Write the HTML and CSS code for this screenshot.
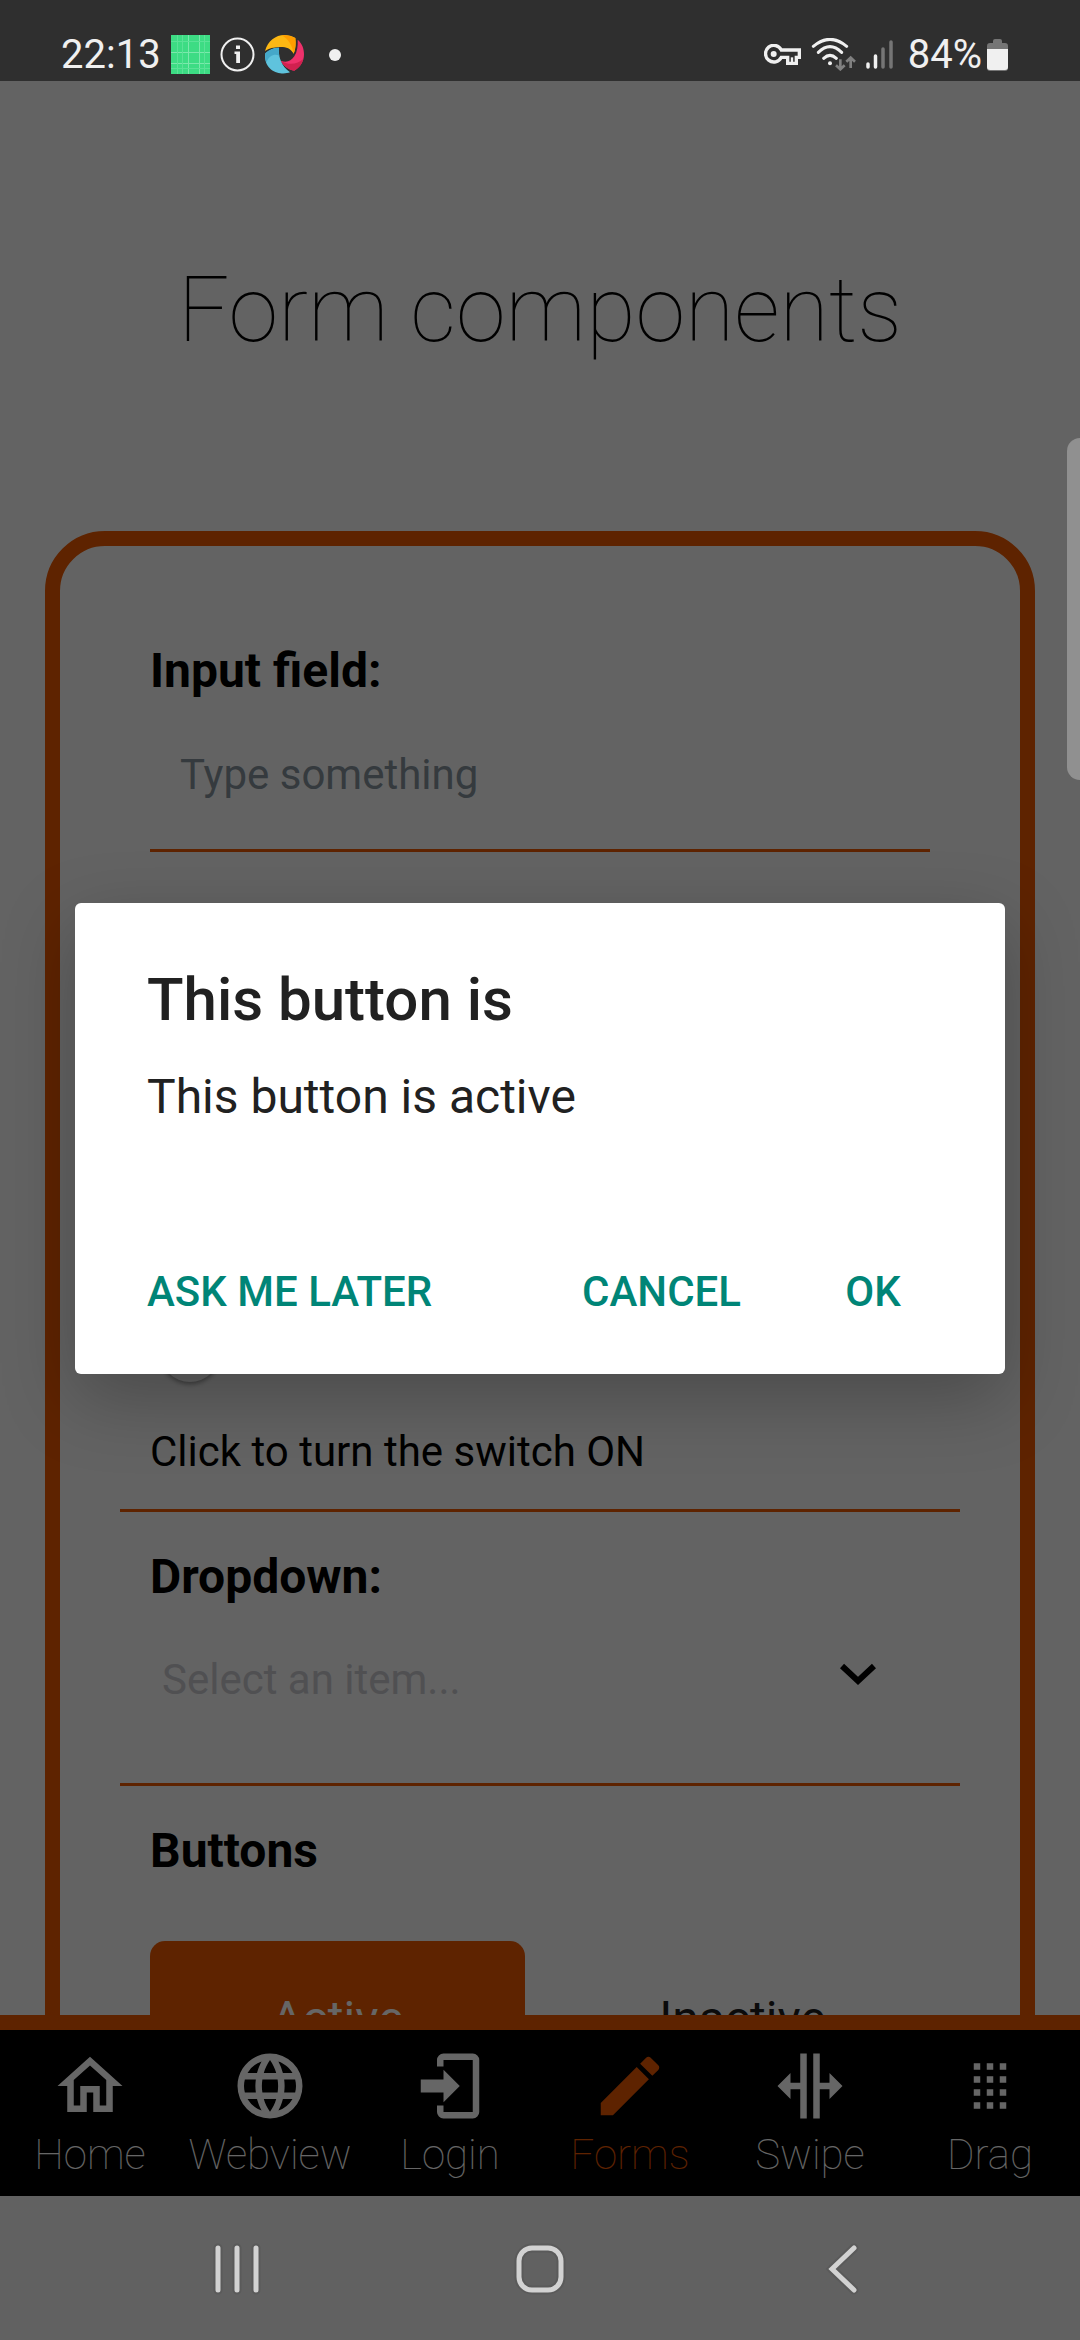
FILE: index.html
```html
<!DOCTYPE html>
<html lang="en">
<head>
<meta charset="utf-8">
<meta name="viewport" content="width=device-width, initial-scale=1">
<title>Form components</title>
<link rel="stylesheet" href="styles.css">
</head>
<body>
<header class="status-bar">
  <div class="status-group">
    <span class="clock">22:13</span>
    <svg class="status-icon" width="39" height="39" viewBox="0 0 39 39" aria-hidden="true">
      <path fill="#3ddc84" d="M0 0h39v39H0z"/>
      <path stroke="#7be8ac" stroke-width="1" d="M0 17.500h39M0 28.500h39M17.500 0v39M28.500 0v39"/>
      <path stroke="#5ae297" stroke-width="1" d="M0 6.500h39M6.500 0v39M0 33.500h39M11.500 0v39M33.500 0v39"/>
    </svg>
    <svg class="status-icon" width="35" height="35" viewBox="0 0 35 35" aria-hidden="true">
      <circle cx="17.500" cy="17.500" r="16" fill="none" stroke="#f0f0f0" stroke-width="2"/>
      <path fill="#f0f0f0" d="M16 8.500h4v3.500h-4zM14.500 14.500H20V26h-3.800v-9h-1.700z"/>
    </svg>
    <svg class="status-icon" width="39" height="39" viewBox="0 0 117 117" aria-hidden="true">
      <path fill="#fdb813" d="M0 48C8 18 32 0 58 0c12 0 24 4 33 9 2 16 1 33-5 47-10-18-26-21-44-20-16 1-30 4-42 12z"/>
      <path fill="#ff9d00" d="M50 1c14-2 30 2 41 8 2 16 1 33-5 47C82 32 70 12 50 1z"/>
      <path fill="#ee316b" d="M98 14c14 12 19 28 19 44 0 22-12 40-29 49-18-3-33-15-41-30 18 7 31 1 41-13 9-14 11-32 10-50z"/>
      <path fill="#d0214f" d="M115 72c-4 16-14 28-27 35-18-3-33-15-41-30 22 14 50 12 68-5z"/>
      <path fill="#5fc3dd" d="M1 55c11-11 25-17 41-17-2 22 3 52 33 74C50 122 0 112 0 62z"/>
      <path fill="#45a8c9" d="M1 55c11-11 25-17 41-17-1 8-1 16 1 24C28 56 14 60 4 82 1 74 0 66 1 55z"/>
    </svg>
    <span class="more-dot"></span>
  </div>
  <div class="status-group status-group-end">
    <svg width="37" height="21" viewBox="0 0 111 63" aria-hidden="true">
      <path fill="none" stroke="#f0f0f0" stroke-width="10" d="M52 18h54v22h-9v18H71V40H52A25 25 0 1 1 52 18z"/>
      <circle cx="29" cy="30" r="9" fill="#f0f0f0"/>
      <path stroke="#f0f0f0" stroke-width="7" d="M84 40v14"/>
    </svg>
    <svg class="wifi" width="45" height="33" viewBox="0 0 135 99" aria-hidden="true">
      <g fill="none" stroke="#f0f0f0" stroke-width="9" stroke-linecap="round">
        <path d="M7 25q50-42 100 0M22 43q35-34 70 0M38 61q19-18 38 0"/>
      </g>
      <circle cx="57" cy="76" r="6" fill="#f0f0f0"/>
      <path fill="none" stroke="#808080" stroke-width="8" d="M88 64v30M75 82l13 12 13-12M119 90V58M106 71l13-12 13 12"/>
    </svg>
    <svg width="27" height="30" viewBox="0 0 27 30" aria-hidden="true">
      <path stroke="#f0f0f0" stroke-width="3.500" stroke-linecap="round" d="M2 24v3M9.500 16v11"/>
      <path stroke="#757575" stroke-width="3.500" stroke-linecap="round" d="M17 9v18M25 2v25"/>
    </svg>
    <span class="battery-level">84%</span>
    <svg width="21" height="32" viewBox="0 0 21 32" aria-hidden="true">
      <path fill="#757575" d="M6 2q0-2 2-2h5q2 0 2 2v2h3q3 0 3 3v22q0 3-3 3H3q-3 0-3-3V7q0-3 3-3h3z"/>
      <path fill="#f0f0f0" d="M0 10h21v18q0 3-3 3H3q-3 0-3-3z"/>
    </svg>
  </div>
</header>

<div class="app">
  <main class="screen">
    <h1 class="title">Form components</h1>
    <form class="card">
      <section class="section section-first">
        <label class="heading" for="text-input">Input field:</label>
        <input class="text-input" id="text-input" type="text" placeholder="Type something">
      </section>
      <section class="section section-switch">
        <input class="switch" id="switch" type="checkbox" role="switch">
        <label class="caption" for="switch">Click to turn the switch ON</label>
      </section>
      <section class="section section-dropdown">
        <label class="heading" for="dropdown">Dropdown:</label>
        <div class="select-wrap">
          <select class="select" id="dropdown">
            <option>Select an item...</option>
          </select>
          <svg class="chevron" width="36" height="24" viewBox="0 0 36 24" aria-hidden="true">
            <path fill="none" stroke="#000" stroke-width="6" d="M2 4l16 15L34 4"/>
          </svg>
        </div>
      </section>
      <section class="section">
        <h2 class="heading">Buttons</h2>
        <div class="button-row">
          <button class="button button-active" type="button">Active</button>
          <button class="button" type="button">Inactive</button>
        </div>
      </section>
    </form>
  </main>

  <nav class="tabs">
    <a class="tab" href="#home">
      <svg class="tab-icon" viewBox="0 0 24 24" aria-hidden="true"><path d="M12 5.690l5 4.500V18h-2v-6H9v6H7v-7.810l5-4.500M12 3L2 12h3v8h6v-6h2v6h6v-8h3L12 3z"/></svg>
      <span>Home</span>
    </a>
    <a class="tab" href="#webview">
      <svg class="tab-icon" viewBox="0 0 24 24" aria-hidden="true"><path d="M16.360 14c.08-.66.14-1.320.14-2s-.06-1.340-.14-2h3.380c.16.640.26 1.310.26 2s-.1 1.360-.26 2m-5.150 5.560c.6-1.110 1.060-2.310 1.380-3.560h2.950a8.030 8.030 0 0 1-4.330 3.560M14.340 14H9.660c-.1-.66-.16-1.320-.16-2s.06-1.350.16-2h4.680c.09.650.16 1.320.16 2s-.07 1.340-.16 2M12 19.960c-.83-1.200-1.500-2.530-1.910-3.960h3.820c-.41 1.430-1.080 2.760-1.910 3.960M8 8H5.080A7.920 7.920 0 0 1 9.400 4.440C8.800 5.550 8.350 6.750 8 8m-2.920 8H8c.35 1.250.8 2.450 1.400 3.560A8 8 0 0 1 5.080 16m-.82-2C4.100 13.360 4 12.690 4 12s.1-1.360.26-2h3.380c-.08.660-.14 1.320-.14 2s.06 1.340.14 2M12 4.030c.83 1.200 1.500 2.540 1.910 3.970h-3.820c.41-1.430 1.080-2.770 1.910-3.970M18.920 8h-2.950a15.700 15.700 0 0 0-1.380-3.560c1.840.63 3.370 1.900 4.330 3.560M12 2C6.470 2 2 6.500 2 12a10 10 0 0 0 10 10 10 10 0 0 0 10-10A10 10 0 0 0 12 2z"/></svg>
      <span>Webview</span>
    </a>
    <a class="tab" href="#login">
      <svg class="tab-icon" viewBox="0 0 24 24" aria-hidden="true"><path d="M10 17v-3H3v-4h7V7l5 5-5 5M10 2h9a2 2 0 0 1 2 2v16a2 2 0 0 1-2 2h-9a2 2 0 0 1-2-2v-2h2v2h9V4h-9v2H8V4a2 2 0 0 1 2-2z"/></svg>
      <span>Login</span>
    </a>
    <a class="tab tab-current" href="#forms" aria-current="page">
      <svg class="tab-icon" viewBox="0 0 24 24" aria-hidden="true"><path d="M20.710 7.040c.39-.39.39-1.040 0-1.410l-2.340-2.340c-.37-.39-1.020-.39-1.410 0l-1.840 1.830 3.750 3.750M3 17.250V21h3.750L17.810 9.930l-3.750-3.750L3 17.250z"/></svg>
      <span>Forms</span>
    </a>
    <a class="tab" href="#swipe">
      <svg class="tab-icon" viewBox="0 0 24 24" aria-hidden="true"><path d="M18 16v-3h-3v9h-2V2h2v9h3V8l4 4-4 4M2 12l4 4v-3h3v9h2V2H9v9H6V8l-4 4z"/></svg>
      <span>Swipe</span>
    </a>
    <a class="tab" href="#drag">
      <svg class="tab-icon" viewBox="0 0 24 24" aria-hidden="true"><path d="M7 5h2v2H7zM11 5h2v2h-2zM15 5h2v2h-2zM7 9h2v2H7zM11 9h2v2h-2zM15 9h2v2h-2zM7 13h2v2H7zM11 13h2v2h-2zM15 13h2v2h-2zM7 17h2v2H7zM11 17h2v2h-2zM15 17h2v2h-2z"/></svg>
      <span>Drag</span>
    </a>
  </nav>

  <div class="scrim">
    <div class="dialog" role="alertdialog" aria-modal="true" aria-labelledby="dialog-title" aria-describedby="dialog-message">
      <h2 class="dialog-title" id="dialog-title">This button is</h2>
      <p class="dialog-message" id="dialog-message">This button is active</p>
      <div class="dialog-actions">
        <button class="dialog-button" type="button">ASK ME LATER</button>
        <span class="dialog-spacer"></span>
        <button class="dialog-button" type="button">CANCEL</button>
        <button class="dialog-button" type="button">OK</button>
      </div>
    </div>
  </div>
  <div class="edge-handle"></div>
</div>

<footer class="system-nav">
  <button class="system-button" type="button" aria-label="Recent apps">
    <svg width="54" height="60" viewBox="0 0 54 60" aria-hidden="true"><g fill="none" stroke-linecap="round"><path stroke="#5a5a5a" stroke-width="9" d="M8 9v42M27 9v42M46 9v42"/><path stroke="#d2d2d2" stroke-width="5" d="M8 9v42M27 9v42M46 9v42"/></g></svg>
  </button>
  <button class="system-button" type="button" aria-label="Home">
    <svg width="60" height="60" viewBox="0 0 60 60" aria-hidden="true"><g fill="none"><rect x="9" y="9" width="42" height="42" rx="13" stroke="#5a5a5a" stroke-width="9"/><rect x="9" y="9" width="42" height="42" rx="13" stroke="#d2d2d2" stroke-width="5"/></g></svg>
  </button>
  <button class="system-button" type="button" aria-label="Back">
    <svg width="60" height="60" viewBox="0 0 60 60" aria-hidden="true"><g fill="none" stroke-linecap="round"><path stroke="#5a5a5a" stroke-width="9" d="M41 9L19 30l22 21"/><path stroke="#d2d2d2" stroke-width="5" d="M41 9L19 30l22 21"/></g></svg>
  </button>
</footer>
</body>
</html>
```
FILE: styles.css
```css
:root {
  --orange: #ea5800;
  --surface: #f8f8f8;
  --accent: #008577;
}

* {
  box-sizing: border-box;
}

body {
  margin: 0;
  height: 100vh;
  display: flex;
  flex-direction: column;
  overflow: hidden;
  font-family: Roboto, "Liberation Sans", sans-serif;
  font-size: 42px;
  line-height: 50px;
  color: #000;
  background: var(--surface);
}

h1,
h2,
p {
  margin: 0;
}

button,
input,
select {
  margin: 0;
  border: 0;
  border-radius: 0;
  background: none;
  color: inherit;
  font: inherit;
}

svg {
  display: block;
  flex: none;
}

/* Status bar */
.status-bar {
  flex: none;
  display: flex;
  justify-content: space-between;
  padding: 28px 72px 0 61px;
  height: 81px;
  background: #2f2f2f;
  color: #f0f0f0;
  font-size: 40px;
  line-height: 53px;
}

.status-group {
  display: flex;
  align-items: center;
  gap: 10px;
}

.more-dot {
  width: 12px;
  height: 12px;
  margin-left: 15px;
  border-radius: 50%;
  background: #f0f0f0;
}

.battery-level {
  margin: 0 -5px 0 5px;
}

/* App */
.app {
  position: relative;
  flex: 1;
  min-height: 0;
  display: flex;
  flex-direction: column;
}

.screen {
  flex: 1;
  min-height: 0;
  overflow: hidden;
  padding: 177px 45px 0;
}

.title {
  margin-bottom: 167px;
  font-size: 90px;
  line-height: 106px;
  font-weight: 100;
  text-align: center;
}

.card {
  padding: 96px 60px;
  border: 15px solid var(--orange);
  border-radius: 60px;
}

.section {
  display: flex;
  flex-direction: column;
  padding: 36px 30px 0;
}

.section-first {
  padding-top: 0;
}

.section-switch {
  padding-top: 470px;
  padding-bottom: 32px;
  border-bottom: 3px solid var(--orange);
}

.section-dropdown {
  padding-bottom: 28px;
  border-bottom: 3px solid var(--orange);
}

.heading {
  font-size: 48px;
  line-height: 57px;
  font-weight: 700;
}

.text-input {
  width: 100%;
  height: 153px;
  padding: 0 30px;
  border-bottom: 3px solid var(--orange);
}

.text-input::placeholder {
  color: #84929b;
  opacity: 1;
}

.switch {
  appearance: none;
  width: 80px;
  height: 60px;
  margin-bottom: 45px;
  display: flex;
  justify-content: center;
}

.switch::before {
  content: "";
  width: 60px;
  height: 60px;
  border-radius: 50%;
  background: #f4f4f4;
  box-shadow: 0 2px 5px rgba(0, 0, 0, 0.4);
}

.select-wrap {
  display: grid;
}

.select {
  grid-area: 1 / 1;
  appearance: none;
  width: 100%;
  height: 150px;
  padding: 0 120px 0 12px;
  color: #c7c7cd;
}

.chevron {
  grid-area: 1 / 1;
  align-self: center;
  justify-self: end;
  margin: 0 54px 12px 0;
  pointer-events: none;
}

.button-row {
  display: flex;
  gap: 30px;
  margin-top: 62px;
}

.button {
  flex: 1;
  padding: 49px 0;
  border-radius: 15px;
  font-size: 48px;
  line-height: 57px;
  color: #1c1c1c;
}

.button-active {
  background: var(--orange);
  color: #fff;
}

/* Tab bar */
.tabs {
  flex: none;
  display: grid;
  grid-template-columns: repeat(6, 1fr);
  padding: 17px 0 16px;
  border-top: 15px solid var(--orange);
  background: #000;
}

.tab {
  display: flex;
  flex-direction: column;
  align-items: center;
  gap: 5px;
  color: #fff;
  font-weight: 100;
  text-decoration: none;
}

.tab-current {
  color: var(--orange);
}

.tab-icon {
  width: 78px;
  height: 78px;
  fill: currentColor;
}

/* Dialog */
.scrim {
  position: absolute;
  inset: 0;
  display: flex;
  align-items: center;
  padding: 0 75px;
  background: rgba(0, 0, 0, 0.6);
}

.dialog {
  flex: 1;
  padding: 62px 0 10px;
  border-radius: 6px;
  background: #fff;
  color: #212121;
  box-shadow: 0 24px 72px rgba(0, 0, 0, 0.25);
}

.dialog-title {
  padding: 0 72px;
  font-size: 60px;
  line-height: 70px;
  font-weight: 500;
}

.dialog-message {
  margin: 33px 0 95px;
  padding: 0 72px;
  font-size: 48px;
  line-height: 57px;
}

.dialog-actions {
  display: flex;
  padding: 0 36px;
}

.dialog-button {
  min-width: 192px;
  height: 144px;
  padding: 0 36px;
  color: var(--accent);
  font-weight: 500;
}

.dialog-spacer {
  flex: 1;
}

.edge-handle {
  position: absolute;
  top: 357px;
  right: 0;
  width: 13px;
  height: 342px;
  border-radius: 13px 0 0 13px;
  background: #909090;
}

/* System navigation */
.system-nav {
  flex: none;
  height: 144px;
  display: flex;
  justify-content: center;
  align-items: center;
  gap: 103px;
  padding-top: 2px;
  background: #616161;
}

.system-button {
  width: 200px;
  padding: 0;
  display: flex;
  justify-content: center;
}
```
